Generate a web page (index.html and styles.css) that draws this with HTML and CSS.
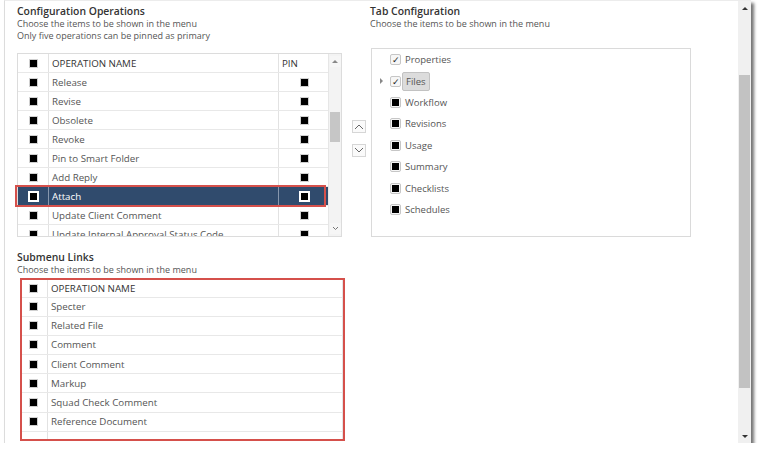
FILE: index.html
```html
<!DOCTYPE html>
<html>
<head>
<meta charset="utf-8">
<link rel="stylesheet" href="styles.css">
</head>
<body>
<div class="window">
  <div class="content">
    <div class="top">
      <section class="ops">
        <h2 class="title">Configuration Operations</h2>
        <p class="hint">Choose the items to be shown in the menu</p>
        <p class="hint">Only five operations can be pinned as primary</p>
        <div class="ops-body">
          <div class="grid-box">
            <div class="grid-rows">
              <div class="row head"><span class="c-chk"><i class="cb"></i></span><span class="c-name">OPERATION NAME</span><span class="c-pin">PIN</span></div>
              <div class="row"><span class="c-chk"><i class="cb"></i></span><span class="c-name">Release</span><span class="c-pin"><i class="cb"></i></span></div>
              <div class="row"><span class="c-chk"><i class="cb"></i></span><span class="c-name">Revise</span><span class="c-pin"><i class="cb"></i></span></div>
              <div class="row"><span class="c-chk"><i class="cb"></i></span><span class="c-name">Obsolete</span><span class="c-pin"><i class="cb"></i></span></div>
              <div class="row"><span class="c-chk"><i class="cb"></i></span><span class="c-name">Revoke</span><span class="c-pin"><i class="cb"></i></span></div>
              <div class="row"><span class="c-chk"><i class="cb"></i></span><span class="c-name">Pin to Smart Folder</span><span class="c-pin"><i class="cb"></i></span></div>
              <div class="row"><span class="c-chk"><i class="cb"></i></span><span class="c-name">Add Reply</span><span class="c-pin"><i class="cb"></i></span></div>
              <div class="row selected"><span class="c-chk"><i class="cb"></i></span><span class="c-name">Attach</span><span class="c-pin"><i class="cb"></i></span></div>
              <div class="row"><span class="c-chk"><i class="cb"></i></span><span class="c-name">Update Client Comment</span><span class="c-pin"><i class="cb"></i></span></div>
              <div class="row"><span class="c-chk"><i class="cb"></i></span><span class="c-name">Update Internal Approval Status Code</span><span class="c-pin"><i class="cb"></i></span></div>
            </div>
            <div class="mini-scroll">
              <span class="mini-btn"><i class="tri-up"></i></span>
              <span class="mini-thumb"></span>
              <span class="mini-btn bottom"><svg width="7" height="5" viewBox="0 0 7 5"><path d="M1 1 L3.5 3.5 L6 1" fill="none" stroke="#777" stroke-width="1"/></svg></span>
            </div>
          </div>
          <div class="move-btns">
            <span class="move-btn"><svg width="10" height="7" viewBox="0 0 10 7"><path d="M1 6 L5 2 L9 6" fill="none" stroke="#666" stroke-width="1"/></svg></span>
            <span class="move-btn"><svg width="10" height="7" viewBox="0 0 10 7"><path d="M1 1 L5 5 L9 1" fill="none" stroke="#666" stroke-width="1"/></svg></span>
          </div>
        </div>
      </section>
      <section class="tabs">
        <h2 class="title">Tab Configuration</h2>
        <p class="hint">Choose the items to be shown in the menu</p>
        <div class="tree">
          <div class="node"><span class="exp"></span><span class="tcb checked">✓</span><span class="lbl">Properties</span></div>
          <div class="node"><span class="exp"><i class="tri-right"></i></span><span class="tcb checked">✓</span><span class="lbl hl">Files</span></div>
          <div class="node"><span class="exp"></span><span class="tcb"><i></i></span><span class="lbl">Workflow</span></div>
          <div class="node"><span class="exp"></span><span class="tcb"><i></i></span><span class="lbl">Revisions</span></div>
          <div class="node"><span class="exp"></span><span class="tcb"><i></i></span><span class="lbl">Usage</span></div>
          <div class="node"><span class="exp"></span><span class="tcb"><i></i></span><span class="lbl">Summary</span></div>
          <div class="node"><span class="exp"></span><span class="tcb"><i></i></span><span class="lbl">Checklists</span></div>
          <div class="node"><span class="exp"></span><span class="tcb"><i></i></span><span class="lbl">Schedules</span></div>
        </div>
      </section>
    </div>
    <section class="submenu">
      <h2 class="title">Submenu Links</h2>
      <p class="hint">Choose the items to be shown in the menu</p>
      <div class="sub-box">
        <div class="sub-grid">
          <div class="srow head"><span class="s-chk"><i class="cb"></i></span><span class="s-name">OPERATION NAME</span></div>
          <div class="srow"><span class="s-chk"><i class="cb"></i></span><span class="s-name">Specter</span></div>
          <div class="srow"><span class="s-chk"><i class="cb"></i></span><span class="s-name">Related File</span></div>
          <div class="srow"><span class="s-chk"><i class="cb"></i></span><span class="s-name">Comment</span></div>
          <div class="srow"><span class="s-chk"><i class="cb"></i></span><span class="s-name">Client Comment</span></div>
          <div class="srow"><span class="s-chk"><i class="cb"></i></span><span class="s-name">Markup</span></div>
          <div class="srow"><span class="s-chk"><i class="cb"></i></span><span class="s-name">Squad Check Comment</span></div>
          <div class="srow"><span class="s-chk"><i class="cb"></i></span><span class="s-name">Reference Document</span></div>
          <div class="srow filler"><span class="s-chk"></span><span class="s-name"></span></div>
        </div>
      </div>
    </section>
  </div>
  <div class="vscroll">
    <span class="vs-arrow"><i class="tri-up dark"></i></span>
    <span class="vs-thumb"></span>
    <span class="vs-arrow end"><i class="tri-down dark"></i></span>
  </div>
</div>
</body>
</html>
```

FILE: styles.css
```css
* { box-sizing: border-box; }
html, body { margin: 0; padding: 0; background: #fff; }
body { font-family: "Open Sans", "Liberation Sans", sans-serif; color: #555; }

.window {
  margin-left: 4px;
  width: 747px;
  height: 443px;
  display: flex;
  background: #fff;
  border-left: 1px solid #dcdcdc;
  border-top: 1px solid #ececec;
  box-shadow: 3px 3px 3px rgba(0,0,0,0.55);
}
.content {
  flex: 1;
  padding: 4px 0 0 12px;
  overflow: hidden;
}
.top {
  display: grid;
  grid-template-columns: 353px 1fr;
}
.title {
  margin: 0;
  font-size: 10.4px;
  line-height: 13px;
  font-weight: 600;
  color: #333;
}
.hint {
  margin: 0;
  font-size: 9px;
  line-height: 12px;
  color: #555;
}

/* operations grid */
.ops-body { display: flex; margin-top: 11px; }
.grid-box {
  width: 325px;
  height: 184px;
  border: 1px solid #dcdcdc;
  display: flex;
}
.grid-rows { flex: 1; overflow-x: visible; overflow-y: clip; }
.row {
  display: grid;
  grid-template-columns: 31px 230px 1fr;
  height: 19px;
  border-bottom: 1px solid #e8e8e8;
  font-size: 9.75px;
  color: #555;
}
.row > span { display: flex; align-items: center; }
.row .c-chk { justify-content: center; border-right: 1px solid #e2e2e2; padding-left: 1px; }
.row .c-name { padding-left: 3px; border-right: 1px solid #e2e2e2; white-space: nowrap; }
.row .c-pin { justify-content: center; padding-left: 1px; }
.row.head { color: #333; }
.row.head .c-pin { justify-content: flex-start; padding-left: 3px; }
.row.selected {
  background: #304b6d;
  color: #fff;
  position: relative;
}
.row.selected::after {
  content: "";
  position: absolute;
  left: -3px;
  right: 2px;
  top: -2px;
  bottom: -2px;
  border: 2px solid #d5504b;
  pointer-events: none;
}
.row.selected .c-chk, .row.selected .c-name { border-right-color: #8797ad; }

.cb {
  display: block;
  width: 7px;
  height: 7px;
  background: #000;
  box-shadow: 0 0 0 1px #d0d0d0;
}
.row.selected .cb {
  width: 11px;
  height: 11px;
  border: 2px solid #fff;
  box-shadow: none;
}

.mini-scroll {
  width: 13px;
  background: #f3f3f3;
  border-left: 1px solid #e6e6e6;
  display: flex;
  flex-direction: column;
  align-items: center;
}
.mini-btn {
  width: 11px;
  height: 11px;
  margin-top: 2px;
  display: flex;
  align-items: center;
  justify-content: center;
  background: #f6f6f6;
}
.mini-btn.bottom { margin-top: auto; margin-bottom: 2px; }
.mini-thumb {
  width: 10px;
  height: 30px;
  margin-top: 45px;
  background: #c6c6c6;
}
.tri-up {
  display: block;
  width: 0; height: 0;
  border-left: 3px solid transparent;
  border-right: 3px solid transparent;
  border-bottom: 3px solid #888;
}
.tri-down {
  display: block;
  width: 0; height: 0;
  border-left: 3px solid transparent;
  border-right: 3px solid transparent;
  border-top: 3px solid #888;
}
.tri-up.dark { border-bottom-color: #333; }
.tri-down.dark { border-top-color: #333; }

.move-btns {
  display: flex;
  flex-direction: column;
  gap: 11px;
  margin-left: 10px;
  padding-top: 67px;
}
.move-btn {
  width: 14px;
  height: 13px;
  border: 1px solid #d6d6d6;
  background: #fafafa;
  display: flex;
  align-items: center;
  justify-content: center;
}

/* tab configuration */
.tree {
  margin: 18px 0 0 1px;
  width: 320px;
  height: 189px;
  border: 1px solid #dadada;
  padding-top: 0;
}
.node {
  height: 21.4px;
  display: flex;
  align-items: center;
  font-size: 9.5px;
  color: #555;
}
.exp { width: 18px; display: flex; padding-left: 8px; }
.tri-right {
  display: block;
  width: 0; height: 0;
  border-top: 3px solid transparent;
  border-bottom: 3px solid transparent;
  border-left: 3px solid #888;
}
.tcb {
  width: 11px;
  height: 11px;
  border: 1px solid #c6c6c6;
  border-radius: 2px;
  background: #f6f6f6;
  display: flex;
  align-items: center;
  justify-content: center;
  font-size: 9px;
  line-height: 1;
  color: #222;
}
.tcb i { display: block; width: 7px; height: 7px; background: #000; }
.lbl { margin-left: 4px; }
.lbl.hl {
  margin-left: 1px;
  padding: 2px 3px;
  background: #dcdcdc;
  border: 1px solid #c2c2c2;
  border-radius: 2px;
}

/* submenu */
.submenu { margin-top: 14px; }
.sub-box {
  margin: 2px 0 0 3px;
  width: 325px;
  height: 163px;
  border: 2px solid #d5504b;
}
.sub-grid { height: 100%; border-right: 1px solid #e4e4e4; overflow: hidden; }
.srow {
  display: grid;
  grid-template-columns: 26px 1fr;
  height: 19.2px;
  border-bottom: 1px solid #e8e8e8;
  font-size: 9.75px;
  color: #555;
}
.srow.head { height: 17.5px; color: #333; }
.srow.filler { border-bottom: none; }
.srow > span { display: flex; align-items: center; }
.srow .s-chk { border-right: 1px solid #e2e2e2; padding-left: 8px; }
.srow .s-name { padding-left: 3px; }

/* window scrollbar */
.vscroll {
  width: 13px;
  background: #f0f0f0;
  display: flex;
  flex-direction: column;
  align-items: center;
}
.vs-arrow { height: 14px; display: flex; align-items: center; justify-content: center; }
.vs-arrow.end { margin-top: auto; }
.vs-thumb {
  width: 11px;
  height: 313px;
  margin-top: 60px;
  background: #c2c2c2;
}
```
